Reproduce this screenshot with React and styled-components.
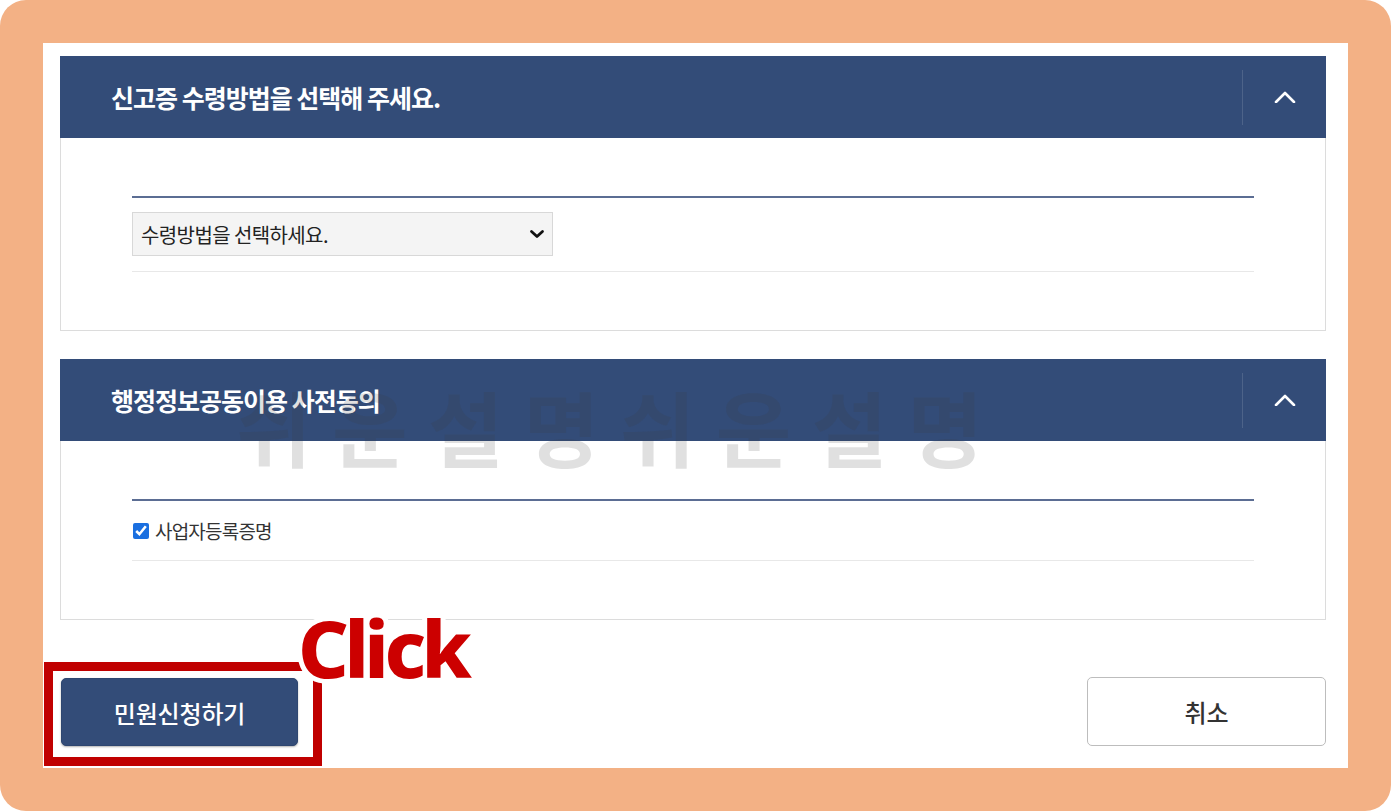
import React from 'react';
import styled, { createGlobalStyle } from 'styled-components';

const GlobalStyle = createGlobalStyle`
  html, body {
    margin: 0;
    padding: 0;
    background: #ffffff;
  }
  body {
    font-family: "Noto Sans CJK KR", "Noto Sans", sans-serif;
  }
  * {
    box-sizing: border-box;
  }
`;

const Frame = styled.div`
  width: 1391px;
  height: 811px;
  padding: 43px;
  background: #f3b185;
  border-radius: 26px;
`;

const Sheet = styled.div`
  position: relative;
  height: 100%;
  background: #ffffff;
  padding: 13px 22px 0 17px;
  display: flex;
  flex-direction: column;
`;

const Panel = styled.section`
  margin-bottom: 28px;
`;

const PanelHeader = styled.div`
  height: 82px;
  background: #334c78;
  display: flex;
  align-items: center;
  padding-left: 51px;
`;

const Title = styled.h2`
  flex: 1;
  margin: 0;
  color: #ffffff;
  font-size: 25px;
  font-weight: 700;
  letter-spacing: -1px;
`;

const Divider = styled.span`
  width: 1px;
  height: 55px;
  background: rgba(255, 255, 255, 0.13);
`;

const Toggle = styled.button`
  width: 83px;
  height: 82px;
  border: none;
  background: transparent;
  display: flex;
  align-items: center;
  justify-content: center;
  padding: 0;
`;

const PanelBody = styled.div`
  border: 1px solid #dcdcdc;
  border-top: none;
  padding: 58px 71px 58px;
`;

const Row = styled.div`
  border-top: 2px solid #5b6d93;
  border-bottom: 1px solid #e8e8e8;
  padding: ${p => p.$pad};
  min-height: ${p => p.$min || 'auto'};
  display: flex;
  align-items: center;
`;

const SelectBox = styled.div`
  width: 421px;
  height: 44px;
  background: #f4f4f4;
  border: 1px solid #d8d8d8;
  display: flex;
  align-items: center;
  justify-content: space-between;
  padding: 0 7px 0 8px;
  font-size: 20px;
  color: #222;
  letter-spacing: -0.6px;
`;

const CheckLabel = styled.label`
  display: flex;
  align-items: center;
  font-size: 19px;
  color: #333;
  letter-spacing: -0.8px;
`;

const Check = styled.input`
  width: 16px;
  height: 16px;
  margin: 0 6px 0 1px;
  accent-color: #1a6fe0;
`;

const ButtonRow = styled.div`
  margin-top: 30px;
  display: flex;
  justify-content: space-between;
  align-items: flex-start;
`;

const Button = styled.button`
  width: ${p => (p.$primary ? '237px' : '239px')};
  height: ${p => (p.$primary ? '68px' : '69px')};
  margin-left: ${p => (p.$primary ? '1px' : '0')};
  margin-top: ${p => (p.$primary ? '0' : '-1px')};
  border-radius: 5px;
  border: ${p => (p.$primary ? '1px solid #2e4670' : '1px solid #bdbdbd')};
  background: ${p => (p.$primary ? '#334c78' : '#ffffff')};
  color: ${p => (p.$primary ? '#ffffff' : '#333333')};
  font-family: "Noto Sans CJK KR", sans-serif;
  font-size: 24px;
  font-weight: 500;
  letter-spacing: -0.2px;
  box-shadow: ${p => (p.$primary ? '0 1px 2px rgba(0,0,0,0.3)' : 'none')};
`;

const Watermark = styled.div`
  position: absolute;
  left: 193px;
  top: 342px;
  font-size: 82px;
  line-height: 1;
  font-weight: 700;
  letter-spacing: 20.5px;
  color: rgba(60, 60, 60, 0.16);
  pointer-events: none;
  white-space: nowrap;
`;

const HighlightBox = styled.div`
  position: absolute;
  left: 1px;
  top: 619px;
  width: 278px;
  height: 104px;
  border: 9px solid #c00000;
  pointer-events: none;
`;

const ClickText = styled.div`
  position: absolute;
  left: 255px;
  top: 565px;
  font-family: "Noto Sans", "Liberation Sans", sans-serif;
  font-size: 79px;
  line-height: 1;
  font-weight: 800;
  letter-spacing: -4.5px;
  color: #cc0000;
  -webkit-text-stroke: 10px #ffffff;
  paint-order: stroke fill;
  pointer-events: none;
`;

const ChevronUp = () => (
  <svg width="22" height="12" viewBox="0 0 22 12" fill="none">
    <path d="M2 11 L11 2 L20 11" stroke="#ffffff" strokeWidth="2.6" strokeLinecap="round" strokeLinejoin="round" />
  </svg>
);

const ChevronDown = () => (
  <svg width="16" height="10" viewBox="0 0 16 10" fill="none">
    <path d="M2.5 2.5 L8 7.5 L13.5 2.5" stroke="#111" strokeWidth="2.8" strokeLinecap="round" strokeLinejoin="round" />
  </svg>
);

const SectionPanel = ({ title, children }) => (
  <Panel>
    <PanelHeader>
      <Title>{title}</Title>
      <Divider />
      <Toggle aria-label="접기">
        <ChevronUp />
      </Toggle>
    </PanelHeader>
    <PanelBody>{children}</PanelBody>
  </Panel>
);

export default function App() {
  return (
    <>
      <GlobalStyle />
      <Frame>
        <Sheet>
          <SectionPanel title="신고증 수령방법을 선택해 주세요.">
            <Row $pad="14px 0 15px">
              <SelectBox>
                <span>수령방법을 선택하세요.</span>
                <ChevronDown />
              </SelectBox>
            </Row>
          </SectionPanel>

          <SectionPanel title="행정정보공동이용 사전동의">
            <Row $pad="0" $min="62px">
              <CheckLabel>
                <Check type="checkbox" defaultChecked />
                사업자등록증명
              </CheckLabel>
            </Row>
          </SectionPanel>

          <ButtonRow>
            <Button $primary>민원신청하기</Button>
            <Button>취소</Button>
          </ButtonRow>

          <Watermark>쉬운설명쉬운설명</Watermark>
          <HighlightBox />
          <ClickText>Click</ClickText>
        </Sheet>
      </Frame>
    </>
  );
}
